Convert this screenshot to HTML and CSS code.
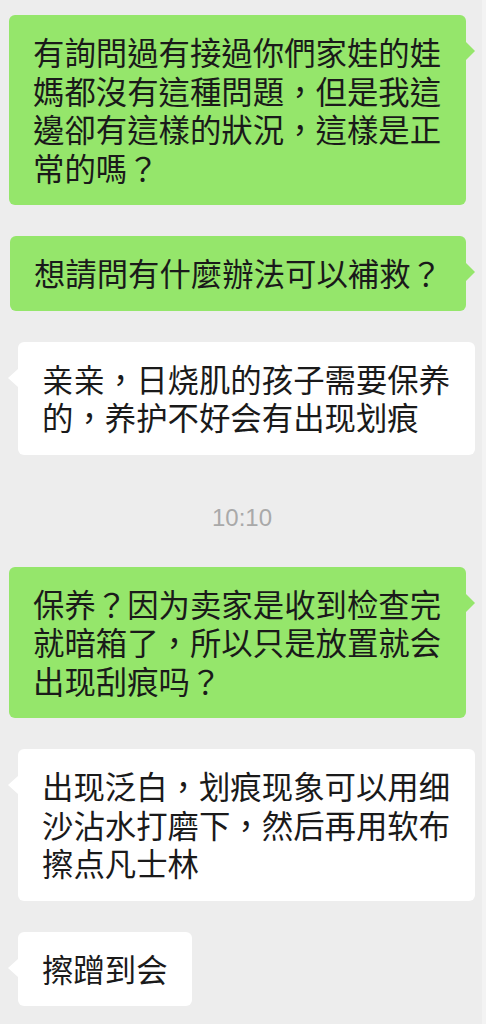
FILE: index.html
```html
<!DOCTYPE html>
<html lang="zh-Hant">
<head>
  <meta charset="UTF-8">
  <meta name="viewport" content="width=device-width, initial-scale=1.0">
  <title>聊天</title>
  <link rel="stylesheet" href="styles.css">
</head>
<body>
  <div class="chat">
    <div class="bubble mine">有詢問過有接過你們家娃的娃媽都沒有這種問題，但是我這邊卻有這樣的狀況，這樣是正常的嗎？</div>
    <div class="bubble mine">想請問有什麼辦法可以補救？</div>
    <div class="bubble theirs">亲亲，日烧肌的孩子需要保养的，养护不好会有出现划痕</div>
    <div class="time">10:10</div>
    <div class="bubble mine">保养？因为卖家是收到检查完就暗箱了，所以只是放置就会出现刮痕吗？</div>
    <div class="bubble theirs">出现泛白，划痕现象可以用细沙沾水打磨下，然后再用软布擦点凡士林</div>
    <div class="bubble theirs">擦蹭到会</div>
  </div>
</body>
</html>
```

FILE: styles.css
```css
html, body {
  margin: 0;
  padding: 0;
  height: 100%;
  background-color: #ededed;
  overflow: hidden;
}
body {
  border-right: 4px solid #f3f3f3;
  box-sizing: border-box;
}
.chat {
  display: flex;
  flex-direction: column;
  gap: 31px;
  padding: 15px 7px 0 9px;
  font-family: "Noto Sans CJK TC", "Noto Sans CJK SC", sans-serif;
}
.bubble {
  position: relative;
  max-width: 457px;
  box-sizing: border-box;
  padding: 18px 24px;
  border-radius: 6px;
  font-size: 31.4px;
  line-height: 38.5px;
  color: #1a1a1a;
}
.bubble::after {
  content: "";
  position: absolute;
  top: 27px;
  border-top: 9px solid transparent;
  border-bottom: 9px solid transparent;
}
.mine {
  align-self: flex-end;
  margin-right: 9px;
  background-color: #95e66b;
}
.mine::after {
  right: -9px;
  border-left: 9px solid #95e66b;
}
.theirs {
  align-self: flex-start;
  margin-left: 9px;
  background-color: #ffffff;
}
.theirs::after {
  left: -10px;
  border-right: 10px solid #ffffff;
}
.time {
  align-self: center;
  padding: 20px 0 6px;
  font-family: "Liberation Sans", Arial, sans-serif;
  font-size: 24px;
  line-height: 24px;
  color: #a9a9a9;
}
```
